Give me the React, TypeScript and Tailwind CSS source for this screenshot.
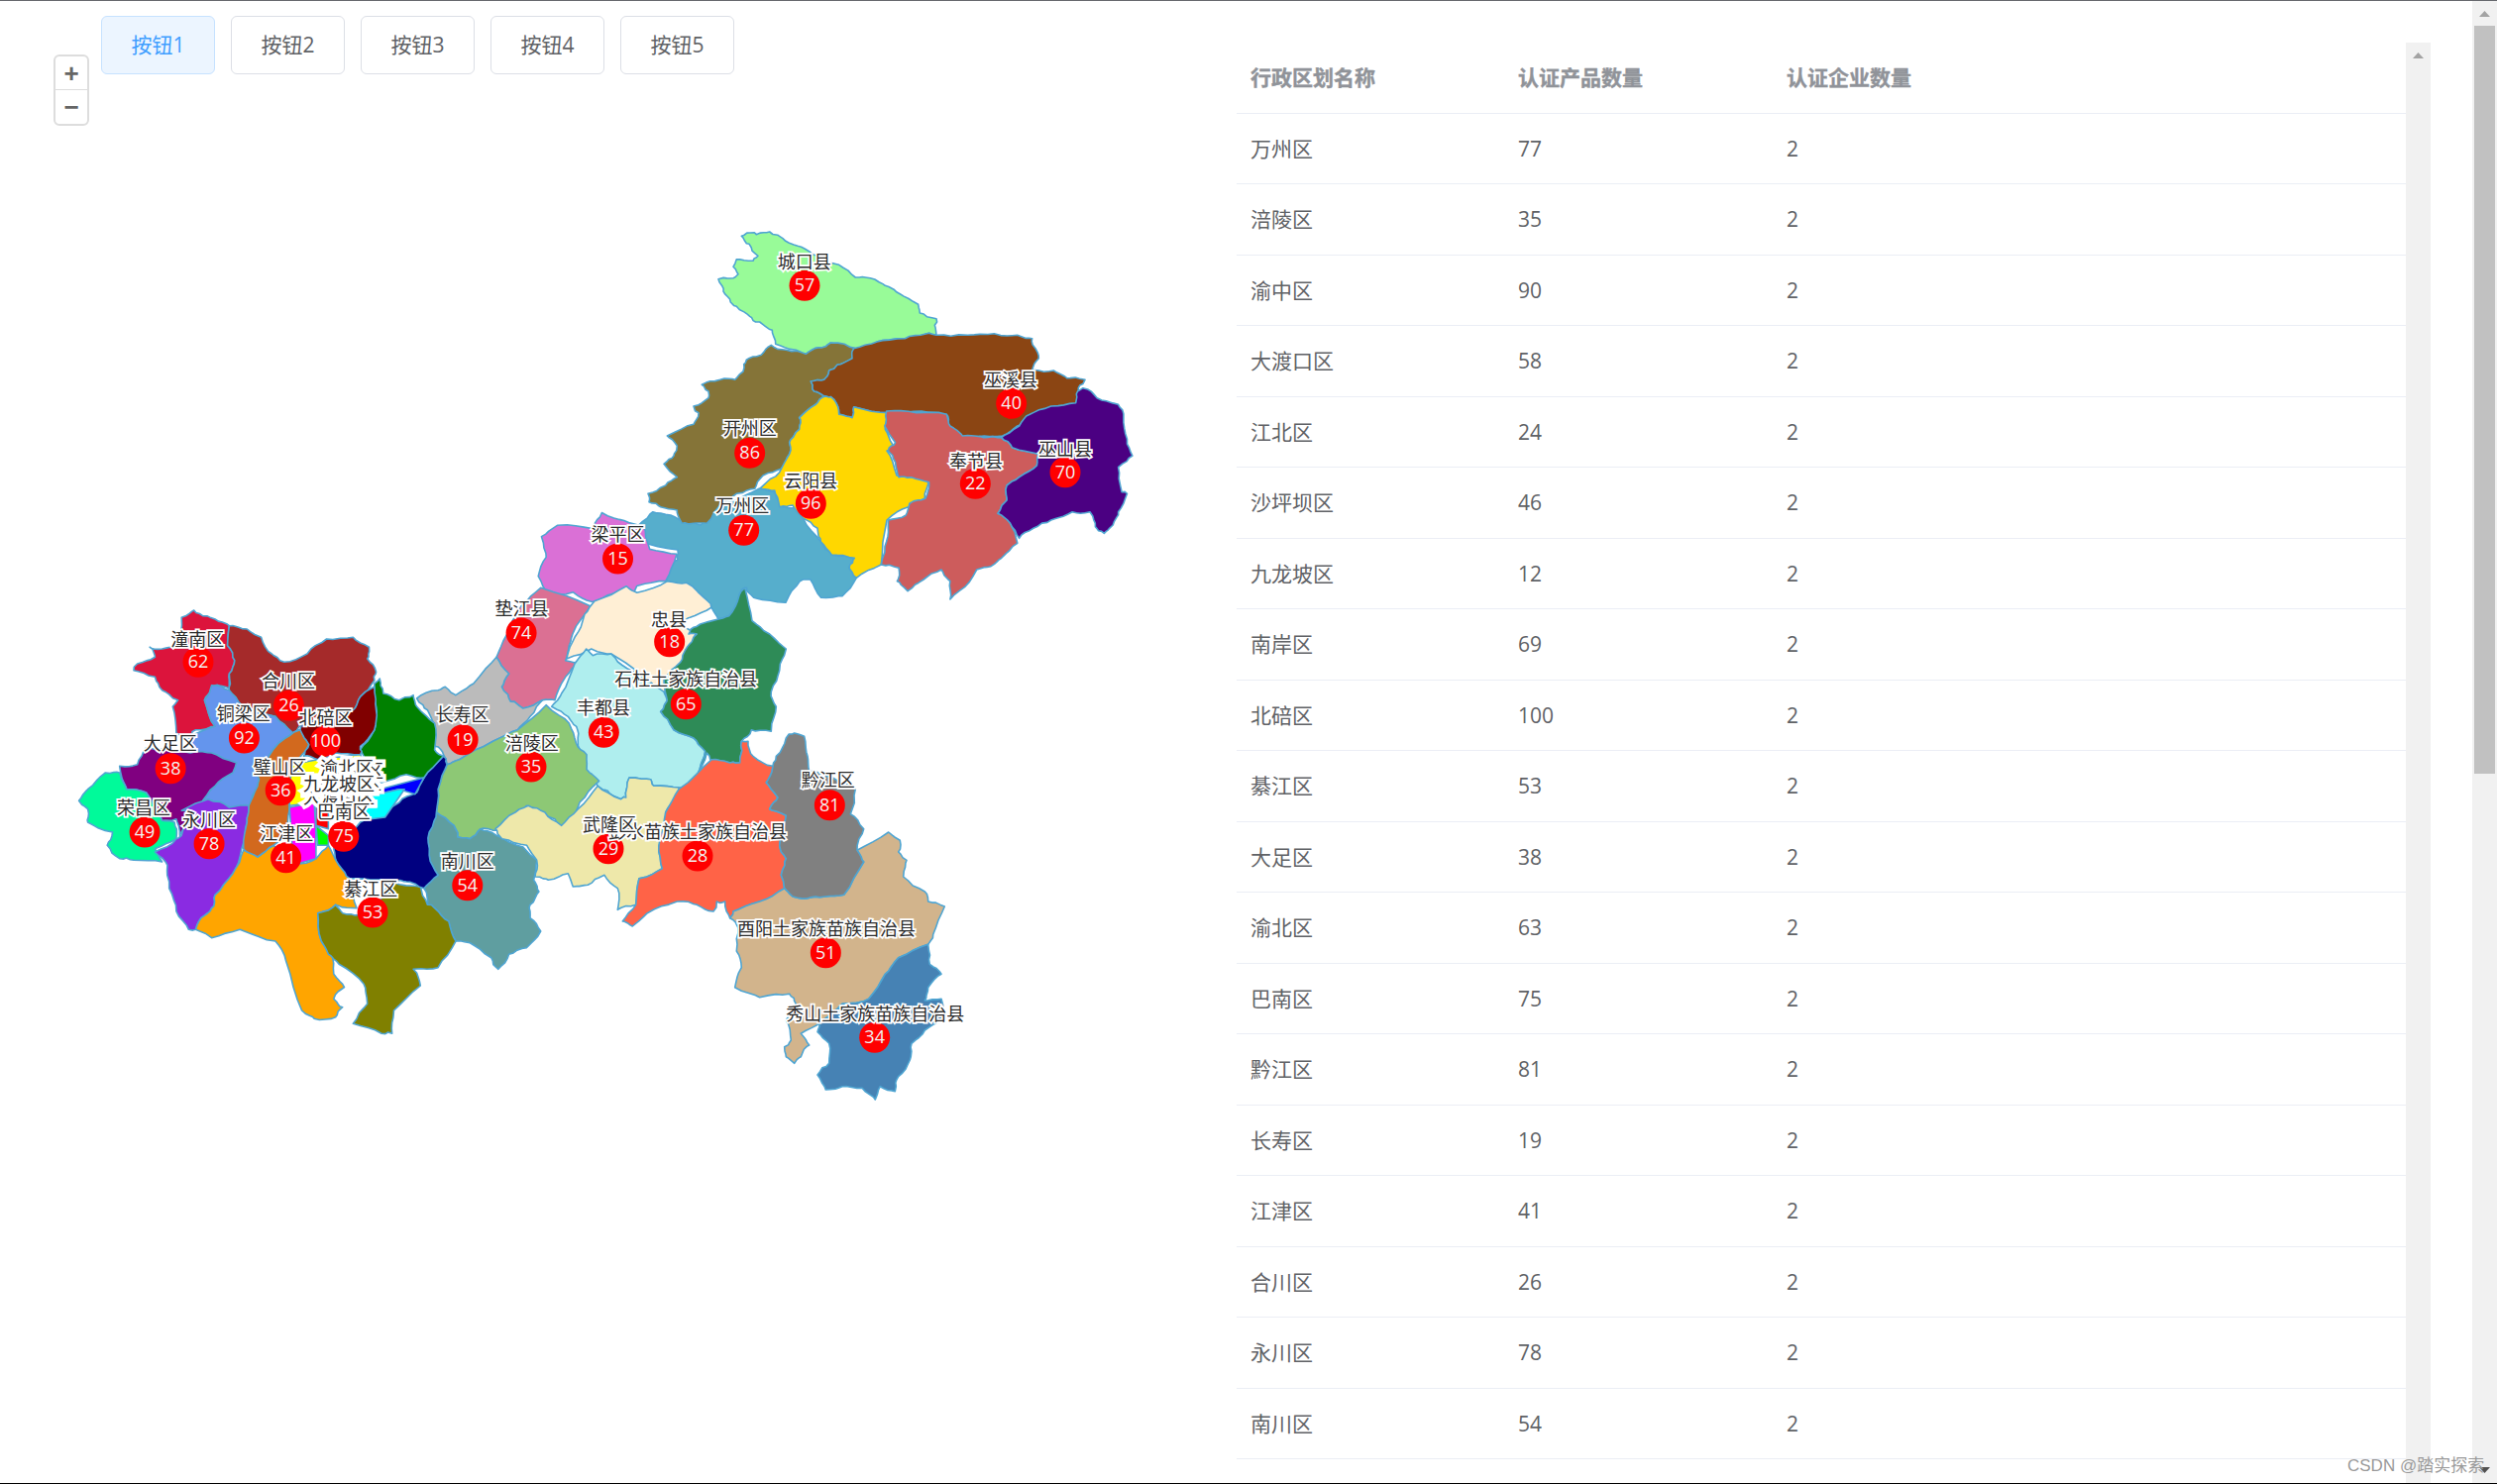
import React from 'react';

type Zone = [number, number, number, number];

// each outline was read from a crop of the map, so every zone has its own origin and scale
const W: Zone = [60, 580, 2.8, 3];
const A: Zone = [650, 220, 3, 3];
const T: Zone = [600, 200, 2.8, 3];
const E: Zone = [500, 620, 3, 3];
const M: Zone = [0, 0, 1 / 1.607, 1 / 1.607];
const F: Zone = [0, 0, 1, 1];

const toPage = (z: Zone, x: number, y: number): [number, number] => [z[0] + x / z[2], z[1] + y / z[3]];

const hash = (x: number, y: number) => {
  const s = Math.sin(Math.round(x * 4) * 12.9898 + Math.round(y * 4) * 78.233) * 43758.5453;
  return s - Math.floor(s);
};

// midpoint wobble so the borders look like real county lines; same offset from both sides of an edge
const wobble = (pts: [number, number][], amp: number) => {
  const out: [number, number][] = [];
  pts.forEach((p, i) => {
    const q = pts[(i + 1) % pts.length];
    out.push(p);
    const len = Math.hypot(q[0] - p[0], q[1] - p[1]);
    if (len > 5) {
      const mx = (p[0] + q[0]) / 2;
      const my = (p[1] + q[1]) / 2;
      out.push([mx + (hash(mx, my) - 0.5) * amp, my + (hash(my, mx) - 0.5) * amp]);
    }
  });
  return out;
};

const outline = (z: Zone, raw: string, rough = true) => {
  let pts = raw
    .trim()
    .split(/\s+/)
    .map((s) => {
      const [x, y] = s.split(',').map(Number);
      return toPage(z, x, y);
    });
  if (rough) pts = wobble(wobble(pts, 3.2), 1.8);
  return pts.map((p) => `${p[0].toFixed(1)},${p[1].toFixed(1)}`).join(' ');
};

const regions: { fill: string; z: Zone; d: string; smooth?: boolean }[] = [
  { fill: '#56aecc', z: T, d: '125,990 165,950 215,960 260,985 300,990 335,950 380,920 465,880 510,890 530,935 570,935 590,970 640,1040 670,1080 735,1090 720,1120 740,1150 700,1205 640,1210 610,1155 580,1160 540,1225 450,1210 430,1180 410,1200 380,1265 350,1275 320,1220 260,1165 205,1160 200,1120 235,1095 235,1065 130,1040' },
  { fill: '#98fb98', z: A, d: '295,55 320,45 340,50 380,42 420,62 465,85 510,110 545,130 590,142 640,180 685,182 730,205 775,230 830,262 835,288 885,305 880,325 885,355 850,352 845,368 790,365 705,375 700,392 640,395 630,392 565,378 530,392 490,412 460,400 398,382 388,340 350,315 320,298 280,268 262,255 240,222 225,185 270,182 285,170 270,148 280,125 330,130 345,115 325,90 305,70' },
  { fill: '#857438', z: A, d: '385,385 430,400 490,412 530,392 565,378 640,395 630,425 585,445 560,462 545,490 505,495 510,510 515,525 550,540 520,565 470,605 470,640 440,680 440,715 415,760 360,780 335,820 280,835 230,870 190,925 150,925 115,925 100,885 50,875 15,860 12,835 65,810 100,785 60,745 90,720 100,690 70,660 150,625 165,590 150,570 195,545 195,525 175,505 230,490 275,490 300,465 310,430 355,415' },
  { fill: '#8b4513', z: A, d: '510,510 505,495 545,490 560,462 585,445 630,425 635,395 705,375 790,365 850,352 885,355 980,355 1060,350 1130,355 1175,365 1185,395 1195,425 1175,460 1240,462 1280,485 1335,490 1315,515 1310,565 1255,575 1180,595 1165,625 1130,630 1085,660 1030,660 985,665 955,665 920,625 915,595 840,585 740,590 635,572 630,605 590,595 575,550 550,540 515,525' },
  { fill: '#ffd700', z: A, d: '550,540 575,550 590,595 630,605 635,572 740,590 730,640 755,690 735,705 765,780 860,795 850,850 800,875 735,915 718,1050 643,1090 621,1060 637,1030 568,1020 535,980 525,940 482,910 450,870 410,875 395,825 350,820 410,770 440,715 440,680 470,640 470,605 520,565' },
  { fill: '#cd5c5c', z: T, d: '825,645 910,650 995,655 1005,690 1040,720 1100,725 1150,725 1180,755 1255,775 1250,810 1200,845 1165,870 1165,915 1140,955 1175,985 1195,1045 1150,1090 1120,1115 1080,1125 1030,1190 1005,1215 1005,1160 980,1125 930,1155 885,1190 855,1160 860,1120 810,1110 825,1040 830,975 880,960 890,925 935,910 945,860 895,845 860,845 850,800 830,765 850,740 820,690' },
  { fill: '#4b0082', z: T, d: '1380,575 1420,605 1480,625 1495,660 1505,730 1520,780 1480,815 1490,890 1505,895 1480,950 1465,990 1440,1015 1415,995 1400,950 1350,950 1290,975 1240,1000 1200,1030 1175,985 1140,955 1165,915 1165,870 1200,845 1250,810 1255,775 1180,755 1150,725 1200,690 1230,655 1290,630 1360,620 1365,585' },
  { fill: '#da70d6', z: M, d: '340,337 350,330 372,332 378,322 392,327 404,330 408,345 425,348 418,365 400,368 395,380 385,373 372,378 360,372 345,375 338,362 343,350' },
  { fill: '#db7093', z: W, d: '1360,40 1500,95 1450,180 1440,215 1430,260 1465,265 1430,310 1400,380 1365,380 1310,405 1275,385 1250,340 1270,300 1235,250 1265,180 1300,100' },
  { fill: '#ffefd5', z: T, d: '0,1220 90,1175 120,1195 205,1160 260,1165 320,1220 330,1240 270,1270 245,1290 285,1320 261,1390 229,1430 196,1500 47,1380 -9,1365 -79,1395 -56,1330 -28,1260' },
  { fill: '#afeeee', z: E, d: '275,105 295,125 350,120 400,165 460,200 510,235 520,260 500,295 540,350 600,375 635,415 610,490 615,520 555,525 480,520 470,500 405,495 395,555 380,560 340,535 310,520 265,460 265,420 250,390 245,340 220,310 170,280 200,240 240,150' },
  { fill: '#2e8b57', z: E, d: '755,-80 777,20 830,60 880,105 860,170 835,235 850,280 835,355 775,350 745,385 740,450 710,450 650,440 640,420 610,490 635,415 600,375 540,350 500,295 520,260 510,200 560,145 580,100 610,60 585,60 600,40 620,30 675,15 707,5 739,-60' },
  { fill: '#bbbbbb', z: W, d: '1010,375 1070,350 1090,340 1120,365 1170,330 1235,250 1270,300 1250,340 1275,385 1310,405 1365,380 1330,430 1295,470 1225,505 1130,560 1095,575 1085,545 1060,520 1060,460 1040,410' },
  { fill: '#8dc875', z: W, d: '1375,395 1440,450 1460,510 1490,545 1490,590 1525,625 1470,690 1450,740 1420,765 1400,740 1320,700 1235,775 1190,770 1160,800 1125,795 1115,760 1065,720 1070,650 1095,575 1130,560 1225,505 1295,470' },
  { fill: '#5f9ea0', z: W, d: '1065,720 1115,760 1125,795 1160,800 1190,770 1235,790 1310,825 1350,865 1340,925 1355,960 1330,1000 1330,1040 1360,1080 1320,1130 1270,1150 1240,1195 1220,1160 1160,1115 1120,1110 1100,1050 1060,1010 1040,1000 1030,950 1070,910 1045,850 1045,780' },
  { fill: '#eee8aa', z: E, d: '0,650 60,600 100,580 150,600 200,640 250,590 310,520 380,560 395,555 405,495 470,500 480,520 555,525 550,560 515,600 510,650 495,700 505,770 435,800 425,880 370,895 370,830 330,790 280,820 235,825 220,785 160,805 120,795 125,745 95,700 20,680' },
  { fill: '#ff6347', z: E, d: '655,440 710,450 740,450 745,385 765,385 780,430 840,460 820,510 855,555 830,590 880,610 860,700 880,740 865,790 875,830 800,870 720,900 710,920 695,870 670,870 660,900 610,880 550,870 460,905 415,945 385,930 425,880 435,800 505,770 495,700 515,600 555,530' },
  { fill: '#d2b48c', z: E, d: '1190,660 1225,685 1220,720 1245,745 1235,795 1300,840 1310,870 1360,885 1325,970 1310,1000 1220,1040 1180,1090 1130,1165 1050,1180 980,1240 925,1270 950,1305 925,1340 905,1360 880,1340 875,1310 895,1290 880,1230 910,1180 890,1150 800,1160 725,1130 745,1070 730,1020 735,950 710,920 720,900 800,870 875,830 900,855 945,860 1000,855 1055,850 1115,750 1095,715' },
  { fill: '#808080', z: E, d: '905,360 935,370 945,430 950,475 1000,490 1090,530 1075,605 1115,650 1095,715 1115,750 1055,850 1000,855 945,860 900,855 875,830 865,790 880,740 860,700 880,610 830,590 855,555 820,510 840,460 850,430 880,375' },
  { fill: '#4682b4', z: E, d: '1310,1000 1315,1060 1350,1090 1310,1130 1300,1170 1350,1165 1355,1230 1300,1260 1260,1300 1255,1350 1220,1400 1210,1445 1165,1430 1150,1470 1110,1435 1050,1430 1000,1440 975,1395 1010,1360 1010,1300 975,1265 980,1240 1050,1180 1130,1165 1180,1090 1220,1040' },
  { fill: '#dc143c', z: W, d: '380,108 405,125 440,135 480,155 475,215 495,260 480,300 480,345 440,335 410,380 440,460 385,470 370,490 330,480 320,400 335,380 290,350 270,310 210,290 220,270 270,250 255,220 290,225 335,205 345,130' },
  { fill: '#a52a2a', z: W, d: '480,155 530,165 570,190 600,240 635,265 700,240 755,195 830,190 875,220 870,255 895,295 890,320 850,370 830,410 700,450 660,480 610,430 520,400 480,355 480,300 495,260 475,215' },
  { fill: '#6495ed', z: W, d: '430,335 480,350 520,400 610,430 660,480 680,470 620,510 560,600 560,640 540,700 480,705 420,680 400,695 440,640 500,570 430,540 380,535 360,490 440,460 410,380' },
  { fill: '#800080', z: W, d: '170,580 220,575 245,525 370,540 430,540 500,570 490,600 440,640 400,695 370,720 340,790 330,740 290,745 245,660 190,650' },
  { fill: '#00fa9a', z: W, d: '55,685 80,650 130,600 170,600 190,650 245,660 290,745 325,750 330,800 270,830 290,870 210,865 170,860 135,820 150,780 80,750 80,710' },
  { fill: '#8a2be2', z: W, d: '345,715 420,680 480,705 535,700 530,750 515,830 490,905 440,970 430,1010 400,1040 385,1075 365,1075 330,1020 310,950 305,880 270,840 330,800 345,790 370,720' },
  { fill: '#ffa500', z: W, d: '520,835 560,855 605,820 660,880 725,860 760,820 790,880 820,920 840,1010 780,1000 730,1025 740,1110 770,1150 775,1210 805,1250 775,1285 800,1310 780,1340 720,1345 685,1320 640,1170 610,1110 510,1075 430,1100 385,1075 400,1040 430,1010 440,970 490,905' },
  { fill: '#808000', z: W, d: '730,1025 780,1000 800,1025 850,1030 900,1000 940,930 1020,945 1040,1000 1060,1010 1100,1050 1120,1110 1070,1190 1000,1195 1020,1245 945,1320 940,1390 910,1390 830,1360 870,1300 860,1240 790,1180 760,1150 740,1110' },
  { fill: '#d2691e', z: W, d: '680,470 705,515 655,575 650,700 645,750 650,770 605,820 560,855 520,830 530,750 535,700 560,640 560,600 620,510' },
  { fill: '#000080', z: W, d: '1085,550 1095,575 1070,650 1065,720 1045,780 1045,850 1070,910 1030,950 980,930 940,930 820,920 790,880 775,830 850,750 880,740 960,690 1010,660 1030,615' },
  { fill: '#008000', z: W, d: '905,315 915,360 960,380 1000,365 1010,400 1060,450 1060,530 1085,550 1030,615 980,605 910,630 880,610 850,530 890,470 895,400 890,330' },
  { fill: '#800000', z: W, d: '890,340 895,410 890,470 850,520 850,545 780,540 730,560 690,550 705,515 680,470 690,450 830,410 850,370' },
  { fill: '#ffff00', z: W, d: '655,575 730,560 850,545 880,610 880,670 840,700 720,690 650,700', smooth: true },
  { fill: '#0000ff', z: W, d: '905,650 1030,615 1005,665 960,650 880,670', smooth: true },
  { fill: '#00ffff', z: W, d: '880,670 960,650 975,650 920,735 880,740 840,700', smooth: true },
  { fill: '#ff00ff', z: W, d: '650,705 720,690 725,780 725,860 660,880 655,775', smooth: true },
  { fill: '#ff0000', z: W, d: '725,685 760,700 760,770 725,760', smooth: true },
  { fill: '#00ff00', z: W, d: '725,760 760,790 760,820 730,820', smooth: true },
];

// label position and marker position, in the crop the region belongs to
const towns: { n: string; v?: number; z: Zone; l: [number, number]; m: [number, number] }[] = [
  { n: '城口县', v: 57, z: A, l: [485, 133], m: [486, 205] },
  { n: '巫溪县', v: 40, z: A, l: [1110, 490], m: [1112, 562] },
  { n: '开州区', v: 86, z: A, l: [320, 637], m: [320, 712] },
  { n: '云阳县', v: 96, z: A, l: [505, 795], m: [505, 865] },
  { n: '万州区', v: 77, z: A, l: [298, 870], m: [302, 946] },
  { n: '奉节县', v: 22, z: A, l: [1005, 737], m: [1003, 805] },
  { n: '巫山县', v: 70, z: A, l: [1275, 700], m: [1275, 770] },
  { n: '梁平区', v: 15, z: M, l: [388, 336], m: [388, 351] },
  { n: '石柱土家族自治县', v: 65, z: E, l: [577, 197], m: [577, 272] },
  { n: '丰都县', v: 43, z: E, l: [327, 283], m: [328, 358] },
  { n: '涪陵区', v: 35, z: E, l: [110, 390], m: [108, 462] },
  { n: '彭水苗族土家族自治县', v: 28, z: E, l: [612, 657], m: [612, 732] },
  { n: '武隆区', v: 29, z: E, l: [345, 638], m: [342, 710] },
  { n: '黔江区', v: 81, z: E, l: [1007, 503], m: [1012, 578] },
  { n: '酉阳土家族苗族自治县', v: 51, z: E, l: [1002, 952], m: [1000, 1025] },
  { n: '秀山土家族苗族自治县', v: 34, z: E, l: [1150, 1210], m: [1148, 1282] },
  { n: '忠县', v: 18, z: E, l: [525, 15], m: [527, 83] },
  { n: '潼南区', v: 62, z: W, l: [390, 197], m: [392, 265] },
  { n: '合川区', v: 26, z: W, l: [647, 322], m: [648, 397] },
  { n: '铜梁区', v: 92, z: W, l: [520, 420], m: [522, 495] },
  { n: '北碚区', v: 100, z: W, l: [752, 432], m: [752, 505] },
  { n: '大足区', v: 38, z: W, l: [313, 512], m: [314, 587] },
  { n: '璧山区', v: 36, z: W, l: [623, 583], m: [625, 653] },
  { n: '荣昌区', v: 49, z: W, l: [238, 705], m: [241, 780] },
  { n: '永川区', v: 78, z: W, l: [423, 742], m: [423, 815] },
  { n: '江津区', v: 41, z: W, l: [642, 785], m: [640, 857] },
  { n: '綦江区', v: 53, z: W, l: [880, 952], m: [885, 1023] },
  { n: '南川区', v: 54, z: W, l: [1153, 867], m: [1153, 941] },
  { n: '长寿区', v: 19, z: W, l: [1138, 425], m: [1140, 500] },
  { n: '垫江县', v: 74, z: W, l: [1306, 102], m: [1305, 177] },
  // the city districts sit on top of each other, their markers barely show
  { n: '渝中区', z: F, l: [350, 804], m: [352, 796] },
  { n: '大渡口区', z: F, l: [342, 804], m: [340, 796] },
  { n: '南岸区', z: F, l: [358, 790], m: [362, 795] },
  { n: '沙坪坝区', z: F, l: [344, 792], m: [345, 796] },
  { n: '江北区', z: F, l: [360, 778], m: [362, 794] },
  { n: '渝北区', z: F, l: [350, 775], m: [352, 794] },
  { n: '九龙坡区', z: F, l: [342, 791], m: [342, 796] },
  { n: '巴南区', v: 75, z: W, l: [803, 718], m: [803, 793] },
];

const rows: [string, number][] = [
  ['万州区', 77], ['涪陵区', 35], ['渝中区', 90], ['大渡口区', 58], ['江北区', 24],
  ['沙坪坝区', 46], ['九龙坡区', 12], ['南岸区', 69], ['北碚区', 100], ['綦江区', 53],
  ['大足区', 38], ['渝北区', 63], ['巴南区', 75], ['黔江区', 81], ['长寿区', 19],
  ['江津区', 41], ['合川区', 26], ['永川区', 78], ['南川区', 54],
];

const ChongqingMap: React.FC = () => (
  <svg width="1248" height="1422" viewBox="0 75 1248 1422" className="block">
    {regions.map((r, i) => (
      <polygon
        key={i}
        points={outline(r.z, r.d, !r.smooth)}
        fill={r.fill}
        stroke="#4fa5d2"
        strokeWidth={1.6}
        strokeLinejoin="round"
      />
    ))}
    {towns.map((t) => {
      const [x, y] = toPage(t.z, t.m[0], t.m[1]);
      return (
        <g key={t.n}>
          <circle cx={x} cy={y} r={15.5} fill="#ff0000" />
          {t.v !== undefined && (
            <text x={x} y={y - 1} textAnchor="middle" dominantBaseline="central" className="fill-[#f2f2f2] text-[18px] [font-family:'Open_Sans','Noto_Sans_CJK_SC',sans-serif]">
              {t.v}
            </text>
          )}
        </g>
      );
    })}
    {towns.map((t) => {
      const [x, y] = toPage(t.z, t.l[0], t.l[1]);
      return (
        <text
          key={t.n}
          x={x}
          y={y - 1.5}
          textAnchor="middle"
          dominantBaseline="central"
          className={
            t.v === undefined
              ? "fill-[#2b2b2b] stroke-white stroke-[7px] [paint-order:stroke] text-[18px] [font-family:'Noto_Sans_CJK_SC',sans-serif]"
              : "fill-[#2b2b2b] stroke-white stroke-[3.5px] [paint-order:stroke] text-[18px] [font-family:'Noto_Sans_CJK_SC',sans-serif]"
          }
        >
          {t.n}
        </text>
      );
    })}
  </svg>
);

const ScrollArrow: React.FC<{ down?: boolean; color: string }> = ({ down, color }) => (
  <svg width="11" height="6" viewBox="0 0 11 6" className="block">
    <polygon points={down ? '0,0 11,0 5.5,6' : '0,6 11,6 5.5,0'} fill={color} />
  </svg>
);

export default function App() {
  return (
    <div className="relative flex h-[1498px] w-[2520px] flex-col overflow-hidden bg-white text-[21px] [font-family:'Open_Sans','Noto_Sans_CJK_SC',sans-serif]">
      <div className="h-px bg-[#66686d]" />
      <div className="flex min-h-0 flex-1">
        <div className="relative w-[1248px]">
          <div className="flex gap-[16px] pl-[102px] pt-[15px]">
            {[1, 2, 3, 4, 5].map((n) => (
              <button
                key={n}
                className={
                  n === 1
                    ? 'h-[59px] w-[115px] rounded-[6px] border border-[#c6e2ff] bg-[#ecf5ff] text-[#409eff]'
                    : 'h-[59px] w-[115px] rounded-[6px] border border-[#dcdfe6] bg-white text-[#606266]'
                }
              >
                按钮{n}
              </button>
            ))}
          </div>
          <ChongqingMap />
          <div className="absolute left-[54px] top-[54px] flex h-[72px] w-[36px] flex-col rounded-[6px] border-[2px] border-[#dddddd] bg-white text-[#666666]">
            <div className="flex h-[34px] items-center justify-center border-b border-[#dddddd] text-[26px] font-bold leading-none [font-family:'Liberation_Sans',sans-serif]">+</div>
            <div className="flex flex-1 items-center justify-center text-[26px] font-bold leading-none [font-family:'Liberation_Sans',sans-serif]">−</div>
          </div>
        </div>

        <div className="mt-[42px] w-[1180px] overflow-hidden">
          <div className="grid h-[71.5px] grid-cols-[270px_271px_1fr] items-center border-b border-[#ebeef5] pb-[1px] pl-[14px] font-bold text-[#909399] [font-family:'Noto_Sans_CJK_SC',sans-serif] [-webkit-text-stroke:0.4px_#909399]">
            <div>行政区划名称</div>
            <div>认证产品数量</div>
            <div>认证企业数量</div>
          </div>
          {rows.map(([name, count]) => (
            <div key={name} className="grid h-[71.5px] grid-cols-[270px_271px_1fr] items-center border-b border-[#ebeef5] pl-[14px] pt-px text-[#606266]">
              <div>{name}</div>
              <div>{count}</div>
              <div>2</div>
            </div>
          ))}
        </div>

        <div className="mt-[42px] flex w-[25px] justify-center bg-[#f1f1f1] pt-[10px]">
          <ScrollArrow color="#a3a3a3" />
        </div>

        <div className="w-[42px]" />

        <div className="flex w-[25px] flex-col items-center justify-between bg-[#f1f1f1] pb-[10px] pt-[10px]">
          <ScrollArrow color="#a3a3a3" />
          <div className="mb-auto mt-[9px] h-[755px] w-[21px] bg-[#c1c1c1]" />
          <ScrollArrow down color="#505050" />
        </div>
      </div>
      <div className="h-px bg-black" />
      <div className="absolute left-[2369px] top-[1468px] text-[17px] leading-[24px] text-[#9a9a9a] [font-family:'Liberation_Sans','Noto_Sans_CJK_SC',sans-serif]">
        CSDN @踏实探索
      </div>
    </div>
  );
}
